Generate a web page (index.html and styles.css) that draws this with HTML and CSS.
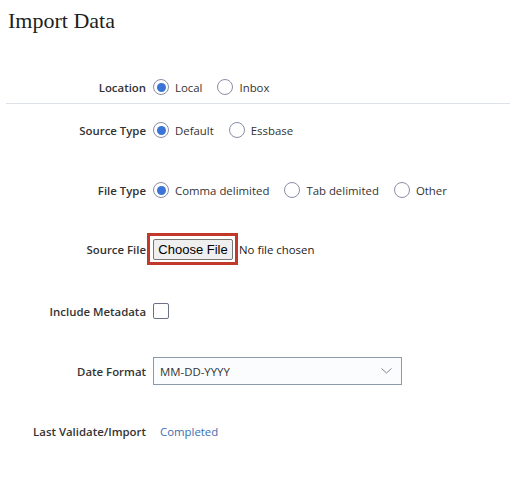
FILE: index.html
```html
<!DOCTYPE html>
<html lang="en">
<head>
<meta charset="utf-8">
<title>Import Data</title>
<link rel="stylesheet" href="styles.css">
</head>
<body>
<div class="page">
  <h1 class="title">Import Data</h1>

  <div class="location">
    <div class="row">
      <div class="label">Location</div>
      <div class="control options">
        <label class="opt"><span class="radio checked"></span>Local</label>
        <label class="opt"><span class="radio"></span>Inbox</label>
      </div>
    </div>
  </div>

  <div class="form">
    <div class="row">
      <div class="label">Source Type</div>
      <div class="control options">
        <label class="opt"><span class="radio checked"></span>Default</label>
        <label class="opt"><span class="radio"></span>Essbase</label>
      </div>
    </div>

    <div class="row">
      <div class="label">File Type</div>
      <div class="control options">
        <label class="opt"><span class="radio checked"></span>Comma delimited</label>
        <label class="opt"><span class="radio"></span>Tab delimited</label>
        <label class="opt"><span class="radio"></span>Other</label>
      </div>
    </div>

    <div class="row row-file">
      <div class="label">Source File</div>
      <div class="control file">
        <span class="highlight"><button class="choose" type="button">Choose File</button></span>
        <span class="nofile">No file chosen</span>
      </div>
    </div>

    <div class="row row-meta">
      <div class="label">Include Metadata</div>
      <div class="control">
        <span class="checkbox"></span>
      </div>
    </div>

    <div class="row row-date">
      <div class="label">Date Format</div>
      <div class="control">
        <div class="select">
          <span class="select-value">MM-DD-YYYY</span>
          <svg class="chevron" width="11" height="6" viewBox="0 0 11 6"><path d="M0.5 0.5 L5.5 5 L10.5 0.5" fill="none" stroke="#7d8790" stroke-width="1"/></svg>
        </div>
      </div>
    </div>

    <div class="row">
      <div class="label">Last Validate/Import</div>
      <div class="control">
        <span class="status">Completed</span>
      </div>
    </div>
  </div>
</div>
</body>
</html>
```

FILE: styles.css
```css
html, body {
  margin: 0;
  padding: 0;
  background: #ffffff;
}

body {
  font-family: "Open Sans", "Noto Sans", sans-serif;
  font-size: 11.4px;
  color: #333333;
}

.title {
  margin: 0;
  padding: 8px 8px 8px 8px;
  font-family: "Liberation Serif", serif;
  font-weight: normal;
  font-size: 22px;
  line-height: 26px;
  color: #1e1e1e;
}

.location {
  padding-top: 30px;
  padding-bottom: 1px;
  margin-left: 6px;
  border-bottom: 1px solid #dde2e8;
}

.location .row {
  margin-left: -6px;
}

.form {
  display: flex;
  flex-direction: column;
  gap: 30px;
  padding-top: 11px;
}

.row {
  display: grid;
  grid-template-columns: 146px 1fr;
  grid-template-rows: 100%;
  column-gap: 7px;
  align-items: center;
  height: 30px;
}

.row-file {
  height: 32px;
  margin-top: -2px;
}

.row-meta {
  margin-top: 1px;
}

.row-date {
  margin-top: 0;
}

.label {
  text-align: right;
  font-weight: 600;
  color: #333333;
  white-space: nowrap;
}

.control {
  display: flex;
  align-items: center;
}

.options {
  gap: 15px;
}

.opt {
  display: flex;
  align-items: center;
  gap: 6px;
  color: #333333;
}

.radio {
  width: 14px;
  height: 14px;
  border: 1px solid #8a8ea6;
  border-radius: 50%;
  display: flex;
  align-items: center;
  justify-content: center;
  background: #ffffff;
}

.radio.checked::after {
  content: "";
  width: 9px;
  height: 9px;
  border-radius: 50%;
  background: #3a74d6;
}

.file {
  gap: 1px;
}

.highlight {
  display: inline-flex;
  margin-left: -6px;
  padding: 3px 2px 2px 3px;
  border: 3px solid #c0392b;
}

.choose {
  font-family: "Liberation Sans", Arial, sans-serif;
  font-size: 13px;
  color: #000000;
  height: 21px;
  width: 80px;
  padding: 0;
  background: #efefef;
  border: 1px solid #767676;
  border-radius: 2px;
}

.nofile {
  color: #222222;
}

.checkbox {
  width: 14px;
  height: 14px;
  border: 1px solid #6c7088;
  border-radius: 2px;
  background: #ffffff;
}

.select {
  box-sizing: border-box;
  width: 249px;
  height: 28px;
  border: 1px solid #8b9aa6;
  background: #fbfcfd;
  display: flex;
  align-items: center;
  justify-content: space-between;
  padding: 0 9px 0 6px;
}

.select-value {
  color: #333333;
}

.status {
  padding-left: 7px;
  color: #3a6fb0;
}
```
